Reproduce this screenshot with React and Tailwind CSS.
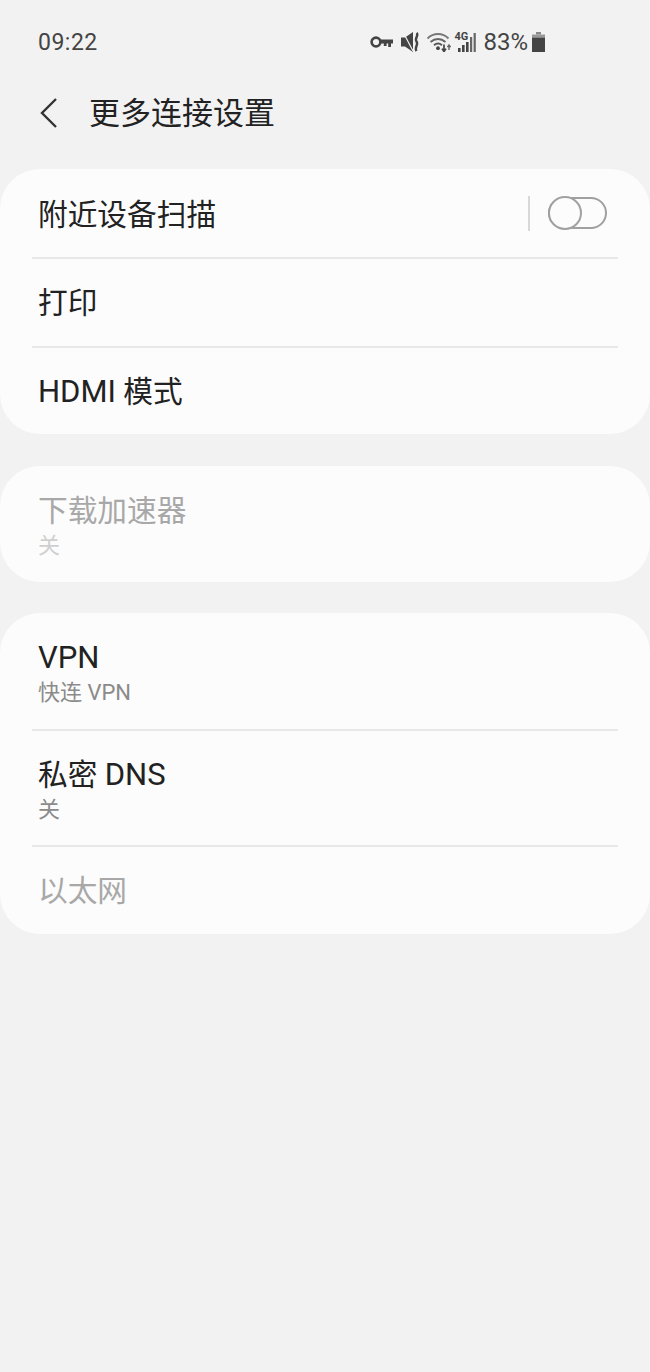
const font = { fontFamily: '"Roboto", "Noto Sans CJK SC", sans-serif' };

function KeyIcon() {
  return (
    <svg width="23" height="12" viewBox="0 0 23 12" fill="none">
      <circle cx="6" cy="6" r="4.4" stroke="#444" strokeWidth="2.6" />
      <path d="M10 3.4H23V7.4H21V11H18.2V7.4H16.6V10H13.8V7.4H10Z" fill="#444" />
    </svg>
  );
}

function MuteIcon() {
  return (
    <svg width="19" height="20" viewBox="0 0 19 20" fill="none">
      <path d="M0 5.5H4L12 0V20L4 14.5H0Z" fill="#444" />
      <path d="M2 0L12 19" stroke="#f2f2f2" strokeWidth="1.2" />
      <path d="M15.5 1C18.5 3.5 13 6 15.5 9.5C18 12.5 13 15 15.5 19" stroke="#444" strokeWidth="2.4" />
    </svg>
  );
}

function WifiIcon() {
  return (
    <svg width="24" height="20" viewBox="0 0 24 20" fill="none">
      <path d="M0.5 6.5C6.5 0.5 15.5 0.5 21.5 6.5" stroke="#777" strokeWidth="1.9" />
      <path d="M3.5 10C8 6 14 6 18.5 10" stroke="#666" strokeWidth="1.9" />
      <path d="M7 13.2C9.5 11.2 12.5 11.2 15 13.2" stroke="#555" strokeWidth="1.9" />
      <circle cx="11" cy="16.2" r="1.9" fill="#444" />
      <path d="M17 12.5V19M15 16.6L17 19.6L19 16.6" stroke="#444" strokeWidth="1.7" />
      <path d="M22 18V13.5M20.4 15.2L22 13L23.6 15.2" stroke="#666" strokeWidth="1.4" />
    </svg>
  );
}

function SignalIcon() {
  return (
    <div className="relative w-[25px] h-[20px]">
      <span className="absolute left-[3px] top-0 text-[11px] leading-[10px] font-bold text-[#444]">4G</span>
      <svg className="absolute left-0 top-0" width="25" height="20" viewBox="0 0 25 20">
        <rect x="7" y="16" width="2.6" height="4" fill="#444" />
        <rect x="11" y="13" width="2.6" height="7" fill="#444" />
        <rect x="15" y="10" width="2.6" height="10" fill="#444" />
        <rect x="19" y="5" width="2.2" height="15" fill="#666" />
        <rect x="22.6" y="1" width="2.2" height="19" fill="#666" />
      </svg>
    </div>
  );
}

function BatteryIcon() {
  return (
    <svg width="13" height="20" viewBox="0 0 13 20">
      <rect x="4" y="0" width="5" height="2.5" fill="#888" />
      <rect x="0" y="2.5" width="13" height="3" fill="#999" />
      <rect x="0" y="5.5" width="13" height="14.5" fill="#444" />
    </svg>
  );
}

function Row({ title, sub, titleClass = "text-[#222]", subClass = "text-[#8b8b8b]", right, className = "" }) {
  return (
    <div className={`flex items-center justify-between pl-[38px] pr-[43px] ${className}`}>
      <div>
        <div className={`text-[29.7px] leading-[38px] ${titleClass}`}>{title}</div>
        {sub && <div className={`text-[22px] leading-[26px] mt-[3px] ${subClass}`}>{sub}</div>}
      </div>
      {right}
    </div>
  );
}

function Divider() {
  return <div className="h-[2px] bg-[#e8e8e8] mx-[32px]" />;
}

export default function App() {
  return (
    <div className="w-[650px] h-[1372px] bg-[#f2f2f2] overflow-hidden" style={font}>
      {/* status bar */}
      <div className="h-[84px] pl-[38px] pr-[105px] flex items-center justify-between">
        <span className="text-[23px] text-[#444] tracking-[0.5px] mt-[3px]">09:22</span>
        <div className="flex items-center">
          <KeyIcon />
          <div className="w-[8px]" />
          <MuteIcon />
          <div className="w-[7px]" />
          <WifiIcon />
          <SignalIcon />
          <span className="text-[24px] text-[#444] ml-[7px] mr-[4px]">83%</span>
          <BatteryIcon />
        </div>
      </div>

      {/* header */}
      <div className="h-[58px] mb-[27px] flex items-center pl-[38px]">
        <svg width="22" height="32" viewBox="0 0 22 32" fill="none">
          <path d="M18 2L4 16L18 30" stroke="#333" strokeWidth="2.4" />
        </svg>
        <span className="ml-[29px] mt-[2px] text-[31px] text-[#222] leading-[58px]">更多连接设置</span>
      </div>

      <div className="flex flex-col gap-[32px]">
        <div className="bg-[#fcfcfc] rounded-[40px] h-[265px] flex flex-col">
          <Row
            title="附近设备扫描"
            className="h-[88px] pt-[4px]"
            right={
              <div className="flex items-center mt-[-4px]">
                <div className="w-[2px] h-[35px] bg-[#d8d8d8] mr-[18px]" />
                <div className="relative w-[59px] h-[32px] rounded-full border-2 border-[#a0a0a0]">
                  <div className="absolute left-[-2px] top-[-3px] w-[34px] h-[34px] rounded-full border-2 border-[#a0a0a0] bg-[#fcfcfc]" />
                </div>
              </div>
            }
          />
          <Divider />
          <Row title="打印" className="h-[87px]" />
          <Divider />
          <Row
            title={<><span className="text-[31px]">HDMI</span> 模式</>}
            className="h-[86px] pt-[2px]"
          />
        </div>

        <div className="bg-[#fcfcfc] rounded-[40px] h-[116px] flex flex-col justify-center">
          <Row title="下载加速器" sub="关" titleClass="text-[#a8a8a8]" subClass="text-[#cfcfcf]" className="pt-[2px]" />
        </div>

        <div className="bg-[#fcfcfc] rounded-[40px] h-[321px] flex flex-col mt-[-1px]">
          <Row title={<span className="text-[31px]">VPN</span>} sub="快连 VPN" className="h-[116px] pt-[2px]" />
          <Divider />
          <Row title={<>私密 <span className="text-[31px]">DNS</span></>} sub="关" className="h-[114px] pt-[2px]" />
          <Divider />
          <Row title="以太网" titleClass="text-[#a8a8a8]" className="h-[87px]" />
        </div>
      </div>
    </div>
  );
}
